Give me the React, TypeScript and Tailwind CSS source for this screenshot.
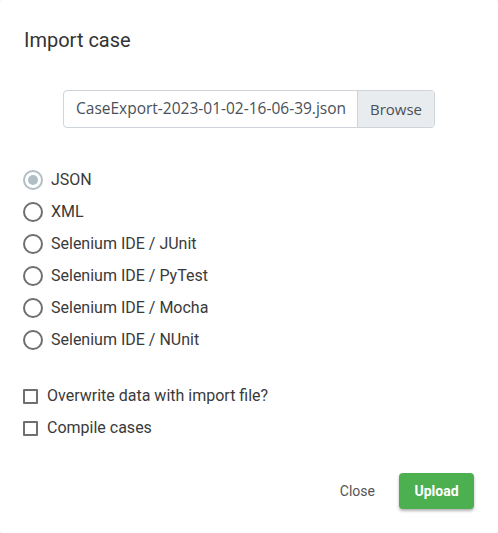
import React from "react";

const labels = [
  "JSON",
  "XML",
  "Selenium IDE / JUnit",
  "Selenium IDE / PyTest",
  "Selenium IDE / Mocha",
  "Selenium IDE / NUnit",
];

export default function App() {
  return (
    <div className="w-[498px] h-[533px] bg-[#ececec]">
      <div
        className="w-[498px] h-[533px] bg-white rounded-[2px] flex flex-col text-[#333]"
        style={{ fontFamily: "Roboto, 'Liberation Sans', sans-serif" }}
      >
        <div className="pl-6 pt-6 h-14 text-[20px] leading-8 text-[#333]">Import case</div>

        <div className="mt-[34px] flex justify-center">
          <div
            className="flex h-[38px] w-[372px] border border-[#ced4da] rounded-[4px] overflow-hidden"
            style={{ fontFamily: "'Open Sans', 'Noto Sans', sans-serif" }}
          >
            <div className="flex-1 flex items-center pl-3 text-[15.5px] text-[#495057] whitespace-nowrap">
              CaseExport-2023-01-02-16-06-39.json
            </div>
            <div className="flex items-center px-3 bg-[#e9ecef] border-l border-[#ced4da] text-[15px] text-[#495057]">
              Browse
            </div>
          </div>
        </div>

        <div className="mt-[36px] flex flex-col">
          {labels.map((l, i) => (
            <div key={l} className="h-8 flex items-center pl-[23px]">
              {i === 0 ? (
                <div className="w-5 h-5 rounded-full border-2 border-[#b0bec5] flex items-center justify-center">
                  <div className="w-[10px] h-[10px] rounded-full bg-[#b0bec5]" />
                </div>
              ) : (
                <div className="w-5 h-5 rounded-full border-2 border-[#6f6f6f]" />
              )}
              <span className="ml-2 text-[16px] text-[#3a3a3a]">{l}</span>
            </div>
          ))}
        </div>

        <div className="mt-[24px] flex flex-col">
          {["Overwrite data with import file?", "Compile cases"].map((l) => (
            <div key={l} className="h-8 flex items-center pl-[23px]">
              <div className="w-[15px] h-[15px] border-2 border-[#6f6f6f] rounded-[1px]" />
              <span className="ml-[9px] text-[16px] text-[#3a3a3a]">{l}</span>
            </div>
          ))}
        </div>

        <div className="mt-[29px] flex justify-end items-center pr-6">
          <button className="h-9 px-4 text-[14px] text-[#555]">Close</button>
          <button className="ml-2 h-9 w-[75px] rounded-[4px] bg-[#4caf50] text-white font-bold text-[14px] shadow-[0_2px_3px_rgba(0,0,0,0.3)]">
            Upload
          </button>
        </div>
      </div>
    </div>
  );
}
